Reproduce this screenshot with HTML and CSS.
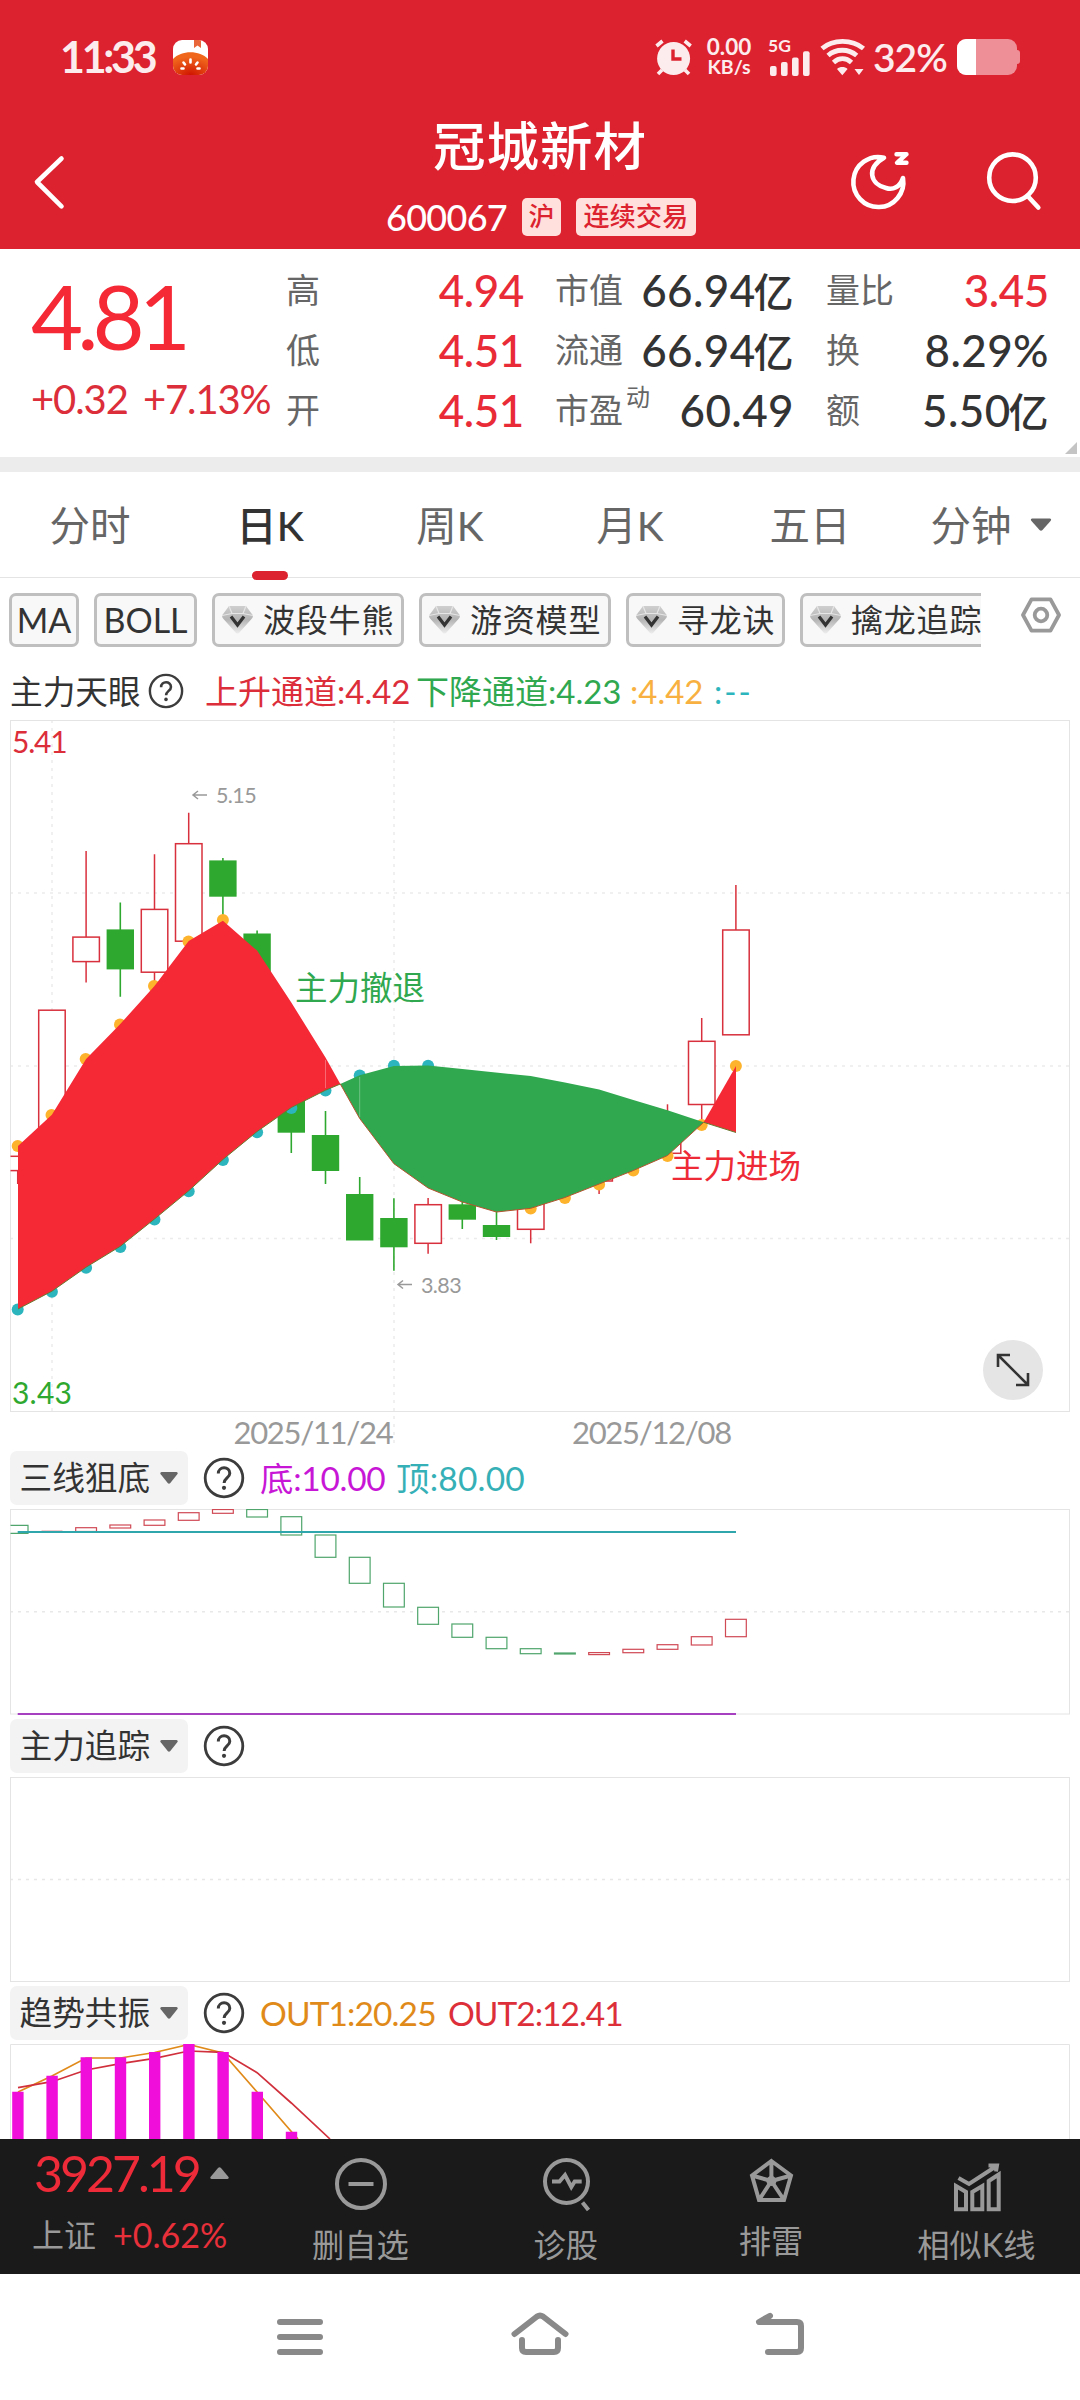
FILE: index.html
```html
<!DOCTYPE html>
<html lang="zh-CN">
<head>
<meta charset="utf-8">
<title>冠城新材 600067</title>
<link rel="stylesheet" href="styles.css">
</head>
<body>
<header class="header">
  <div class="status">
    <span class="clock">11:33</span>
    <svg class="app-icon" width="35" height="35" viewBox="0 0 35 35">
      <defs>
        <clipPath id="app-clip"><rect width="35" height="35" rx="9"/></clipPath>
        <radialGradient id="app-fill" cx="0.5" cy="1" r="0.8"><stop offset="0" stop-color="#d01400"/><stop offset="1" stop-color="#f0671c"/></radialGradient>
      </defs>
      <g clip-path="url(#app-clip)">
        <rect width="35" height="35" fill="#fff"/>
        <path d="M0 19C8 10 27 10 35 19V35H0Z" fill="url(#app-fill)"/>
        <path d="M21 0h7v8l-3.500-2.500L21 8Z" fill="#e8663a"/>
        <path d="M17.500 19.500v3M10.500 22.500l1.500 2M24.500 22.500l-1.500 2M8.500 28.500h2M26.500 28.500h-2" stroke="#fff" stroke-width="2.600" stroke-linecap="round"/>
      </g>
    </svg>
    <div class="status-right">
      <svg width="37" height="38" viewBox="655 38 37 38">
        <circle cx="673.600" cy="58.500" r="16.500" fill="#fdecee"/>
        <path d="M656.500 46l6-5M690.700 46l-6-5M658 74l4-4M689 74l-4-4" stroke="#fdecee" stroke-width="3.600" fill="none"/>
        <path d="M673 49.500v9.500h8.500" stroke="#dc222f" stroke-width="3.400" fill="none"/>
      </svg>
      <div class="speed"><span class="speed-num">0.00</span><span class="speed-unit">KB/s</span></div>
      <div class="signal">
        <span class="signal-type">5G</span>
        <svg width="44" height="25" viewBox="767 50 44 25" fill="#fdecee">
          <rect x="770" y="65" width="6.600" height="10" rx="2"/><rect x="781" y="61" width="6.600" height="14" rx="2"/><rect x="792" y="56.500" width="6.600" height="18.500" rx="2"/><rect x="803" y="50.300" width="6.600" height="24.700" rx="2"/>
        </svg>
      </div>
      <svg class="wifi" width="46" height="38" viewBox="820 38 46 38">
        <g fill="none" stroke="#fdecee" stroke-width="4.800">
          <path d="M822 48.500C833 39 852 39 863.500 48.500"/>
          <path d="M828 55.500C836 48.500 848.500 48.500 856.700 55.500"/>
          <path d="M833.500 62.500C839 57.500 846 57.500 851.500 62.500"/>
        </g>
        <path d="M837 69c3-2.600 7.600-2.600 10.600 0l-5.300 6.300ZM854.500 69h9l-4.500 6Z" fill="#fdecee"/>
      </svg>
      <span class="percent">32%</span>
      <div class="battery"><i class="battery-level"></i><i class="battery-nub"></i></div>
    </div>
  </div>
  <div class="titlebar">
    <svg class="back" width="36" height="60" viewBox="31 152 36 60"><path d="M61.500 158.500L37 182l24.500 24.300" fill="none" stroke="#fff" stroke-width="4.600" stroke-linecap="round" stroke-linejoin="round"/></svg>
    <div class="title">
      <h1 class="name">冠城新材</h1>
      <div class="subtitle"><span class="code">600067</span><span class="tag">沪</span><span class="tag tag-wide">连续交易</span></div>
    </div>
    <div class="actions">
      <svg width="62" height="62" viewBox="849 151 62 62" fill="none" stroke="#fff" stroke-linecap="round" stroke-linejoin="round">
        <path d="M884 157.700A25 25 0 1 0 903 178C900 187 893 190.500 886 188C870 184 866 168 884 157.700Z" stroke-width="4.600"/>
        <path d="M896.500 154.200h10l-9.500 8.600h9.500" stroke-width="4.400"/>
      </svg>
      <svg width="62" height="62" viewBox="984 151 62 62" fill="none" stroke="#fff" stroke-width="4.600" stroke-linecap="round">
        <circle cx="1012.500" cy="177.700" r="23.300"/><path d="M1029 197.500l9.300 10"/>
      </svg>
    </div>
  </div>
</header>

<section class="quote">
  <div class="price">
    <div class="last">4.81</div>
    <div class="change">+0.32 +7.13%</div>
  </div>
  <dl class="stats c1">
    <div><dt>高</dt><dd class="up">4.94</dd></div>
    <div><dt>低</dt><dd class="up">4.51</dd></div>
    <div><dt>开</dt><dd class="up">4.51</dd></div>
  </dl>
  <dl class="stats c2">
    <div><dt>市值</dt><dd>66.94<b>亿</b></dd></div>
    <div><dt>流通</dt><dd>66.94<b>亿</b></dd></div>
    <div><dt>市盈<sup>动</sup></dt><dd>60.49</dd></div>
  </dl>
  <dl class="stats c3">
    <div><dt>量比</dt><dd class="up">3.45</dd></div>
    <div><dt>换</dt><dd>8.29%</dd></div>
    <div><dt>额</dt><dd>5.50<b>亿</b></dd></div>
  </dl>
  <i class="corner"></i>
</section>

<nav class="tabs">
  <span class="tab">分时</span>
  <span class="tab active">日K</span>
  <span class="tab">周K</span>
  <span class="tab">月K</span>
  <span class="tab">五日</span>
  <span class="tab">分钟<svg class="tab-caret" width="22" height="13" viewBox="0 0 22 13"><path d="M2 .5h18q2 .5.500 2.500L12.500 12q-1.500 1.300-3 0L1.500 3Q0 1 2 .5Z" fill="#666"/></svg></span>
</nav>

<svg width="0" height="0" class="defs">
  <defs>
    <linearGradient id="gem-fill" x1="0" x2="0" y1="0" y2="1"><stop offset="0" stop-color="#cfcfcf"/><stop offset=".5" stop-color="#b4b4b4"/><stop offset="1" stop-color="#ededed"/></linearGradient>
    <symbol id="gem" viewBox="0 0 31 28">
      <path d="M7 0h17l7 9.500q0 2-1.500 3.500L17 27q-1.500 1-3 0L1.500 13Q0 11.500 0 9.500Z" fill="url(#gem-fill)"/>
      <path d="M7 0l3 7.500h11L24 0M0 9.500l10-2M31 9.500l-10-2" stroke="#e6e6e6" stroke-width="1.200" fill="none"/>
      <path d="M9 10.500l6.500 8.500L22 10.500" stroke="#333" stroke-width="3.200" fill="none"/>
    </symbol>
    <symbol id="help" viewBox="0 0 42 42">
      <circle cx="21" cy="21" r="18.800" fill="none" stroke="#3c3c3c" stroke-width="2.800"/>
      <path d="M15.300 16.500c0-7.500 11.500-7.500 11.500-.3 0 4.600-5.700 4.800-5.700 9.800" fill="none" stroke="#3c3c3c" stroke-width="3"/>
      <circle cx="21" cy="30.800" r="2.100" fill="#3c3c3c"/>
    </symbol>
    <symbol id="caret" viewBox="0 0 18 12"><path d="M1.500 0h15q2 .6.800 2.300L10.300 11q-1.300 1.300-2.600 0L.7 2.300Q-.5.600 1.500 0Z" fill="#666"/></symbol>
  </defs>
</svg>

<div class="chips">
  <div class="chip-list">
    <span class="chip latin w-ma">MA</span>
    <span class="chip latin w-boll">BOLL</span>
    <span class="chip"><svg class="gem"><use href="#gem"/></svg>波段牛熊</span>
    <span class="chip"><svg class="gem"><use href="#gem"/></svg>游资模型</span>
    <span class="chip w-three"><svg class="gem"><use href="#gem"/></svg>寻龙诀</span>
    <span class="chip"><svg class="gem"><use href="#gem"/></svg>擒龙追踪</span>
  </div>
  <svg class="settings" width="40" height="36" viewBox="0 0 40 36" fill="none" stroke="#999" stroke-width="3.800" stroke-linejoin="round"><path d="M10.500 2.300h19L38 18l-8.500 15.700h-19L2 18Z"/><circle cx="20" cy="18" r="6.300"/></svg>
</div>

<div class="legend">
  <span class="l-name">主力天眼</span>
  <svg class="l-help"><use href="#help"/></svg>
  <span class="l-up">上升通道:4.42</span>
  <span class="l-down">下降通道:4.23</span>
  <span class="l-mid">:4.42</span>
  <span class="l-none">:--</span>
</div>

<div class="main-chart">
  <svg width="1080" height="731" viewBox="0 720 1080 731">
    <clipPath id="main-clip"><rect x="10.500" y="720" width="1059" height="692"/></clipPath>
    <g stroke="#ececec" stroke-width="1.500" stroke-dasharray="3 5">
      <path d="M10 893H1069M10 1066H1069M10 1238.500H1069"/>
      <path d="M52 720V1411M394 720V1443"/>
    </g>
    <rect x="10.500" y="720.500" width="1059" height="691" fill="none" stroke="#e4e4e4"/>
    <g clip-path="url(#main-clip)">
      <g fill="#fff" stroke="#d8303c" stroke-width="1.500">
        <path d="M17.700 1170.600V1184"/><rect x="4.500" y="1156.300" width="26.500" height="14.300"/>
        <rect x="38.700" y="1010.200" width="26.500" height="125"/>
        <path d="M86.100 851V982.400"/><rect x="72.900" y="937.100" width="26.500" height="24.500"/>
        <path d="M154.500 854.300V990"/><rect x="141.300" y="909.400" width="26.500" height="62.800"/>
        <path d="M188.700 812.700V843.700"/><rect x="175.500" y="843.700" width="26.500" height="97.500"/>
        <path d="M428.100 1198V1253.700"/><rect x="414.900" y="1204.700" width="26.500" height="38.600"/>
        <path d="M530.700 1190V1243.300"/><rect x="517.500" y="1195" width="26.500" height="34.300"/>
        <path d="M599.100 1160V1194"/><rect x="585.900" y="1165" width="26.500" height="16"/>
        <path d="M667.500 1104.300V1160"/><rect x="654.300" y="1120" width="26.500" height="33.300"/>
        <path d="M701.700 1018V1120"/><rect x="688.500" y="1041.300" width="26.500" height="63.200"/>
        <path d="M735.900 885V930"/><rect x="722.700" y="930" width="26.500" height="104.800"/>
      </g>
      <g fill="#2fa82f" stroke="#2fa82f" stroke-width="1.600">
        <path d="M120.300 902.400V996.700M222.900 858V918M257.100 930.600V960M291.300 1120V1153M325.500 1111V1184M359.700 1177V1240M393.900 1198.300V1270.700M462.300 1201.700V1229M496.500 1210V1240"/>
        <g stroke="none">
          <rect x="106.600" y="929.400" width="27.400" height="40"/><rect x="209.200" y="860.400" width="27.400" height="36.300"/><rect x="243.400" y="933.500" width="27.400" height="41"/><rect x="277.600" y="1095" width="27.400" height="37.700"/><rect x="311.800" y="1135" width="27.400" height="36"/><rect x="346" y="1194" width="27.400" height="46.500"/><rect x="380.200" y="1218" width="27.400" height="29.300"/><rect x="448.600" y="1204.300" width="27.400" height="15.400"/><rect x="482.800" y="1225" width="27.400" height="12"/>
        </g>
      </g>
    </g>
    <g fill="#fdb32c">
      <circle cx="17.700" cy="1146" r="6"/><circle cx="51.500" cy="1115" r="6"/><circle cx="85.700" cy="1059" r="6"/><circle cx="120" cy="1024.500" r="6"/><circle cx="154" cy="986" r="6"/><circle cx="188.500" cy="941.500" r="6"/><circle cx="222.900" cy="920" r="6"/>
      <circle cx="530.700" cy="1208.500" r="6"/><circle cx="564.900" cy="1198" r="6"/><circle cx="599.100" cy="1184.500" r="6"/><circle cx="633.300" cy="1170.500" r="6"/><circle cx="667.500" cy="1156" r="6"/><circle cx="701.700" cy="1125" r="6"/><circle cx="735.900" cy="1066" r="6"/>
    </g>
    <g fill="#2cb5bd">
      <circle cx="17.700" cy="1309.400" r="6"/><circle cx="51.900" cy="1291.700" r="6"/><circle cx="86.100" cy="1267.700" r="6"/><circle cx="120.300" cy="1247" r="6"/><circle cx="154.500" cy="1219.500" r="6"/><circle cx="188.700" cy="1191.200" r="6"/><circle cx="222.900" cy="1160" r="6"/><circle cx="257.100" cy="1132.200" r="6"/><circle cx="291.300" cy="1108" r="6"/><circle cx="325.500" cy="1090.500" r="6"/><circle cx="359.700" cy="1075.500" r="6"/><circle cx="393.900" cy="1065.700" r="6"/><circle cx="428.100" cy="1065.700" r="6"/>
    </g>
    <path fill="#f52835" d="M18 1146L51.900 1114.700 86.100 1059 120.300 1024 154.500 986 188.700 941 222.900 920.800 257.100 950.600 291.300 1002.500 325.500 1057.600 340.300 1084 325.500 1090.200 291.300 1107.500 257.100 1131.500 222.900 1159.500 188.700 1190.800 154.500 1219 120.300 1246.300 86.100 1267.200 51.900 1291.200 18 1309Z"/>
    <path fill="#2fa84f" d="M340.300 1084L359.700 1075.300 393.900 1066 428.100 1065.500 462.300 1069 530.700 1076 564.900 1082.500 599.100 1089.500 633.300 1100 667.500 1110.300 703.700 1122.300 667.500 1155.500 633.300 1170.500 599.100 1184 564.900 1197.500 530.700 1208.300 496.500 1212 462.300 1202 428.100 1188 393.900 1163.700 359.700 1118.500Z"/>
    <path fill="#f52835" d="M703.700 1122.300L736 1066V1132.500Z"/>
    <path fill="none" stroke="#b3542e" stroke-width="1" d="M340.300 1084L359.700 1118.500 393.900 1163.700 428.100 1188 462.300 1202 496.500 1212 530.700 1208.300 564.900 1197.500 599.100 1184 633.300 1170.500 667.500 1155.500 703.700 1122.300"/>
    <path fill="none" stroke="#6a7a2e" stroke-width="1" d="M18 1309L51.900 1291.200 86.100 1267.200 120.300 1246.300 154.500 1219 188.700 1190.800 222.900 1159.500 257.100 1131.500 291.300 1107.500 325.500 1090.200 340.300 1084M703.700 1122.300L736 1132.500"/>
    <path stroke="#fff" stroke-opacity=".3" d="M325.500 1060V1088M359.700 1077V1117"/>
    <g fill="none" stroke="#999" stroke-width="1.500"><path d="M207 795H193M198 791L193 795l5 4M412 1284.500H398M403 1280.500L398 1284.500l5 4"/></g>
    <g class="chart-note"><text x="216" y="802.500">5.15</text><text x="421" y="1292.500">3.83</text></g>
    <text class="signal-label green" x="295" y="1000">主力撤退</text>
    <text class="signal-label red" x="671" y="1177.500">主力进场</text>
    <text class="scale red-d" x="12" y="753.300">5.41</text>
    <text class="scale green-d" x="12" y="1403.500">3.43</text>
    <text class="date" x="233.500" y="1444">2025/11/24</text>
    <text class="date" x="572" y="1444">2025/12/08</text>
  </svg>
  <button class="expand"><svg width="40" height="40" viewBox="0 0 40 40" fill="none" stroke="#333" stroke-width="2.600"><path d="M5 5L35 35M17 5H5V17M23 35H35V23"/></svg></button>
</div>

<section class="panel">
  <div class="panel-head">
    <span class="selector">三线狙底<svg class="caret"><use href="#caret"/></svg></span>
    <svg class="help"><use href="#help"/></svg>
    <span class="val v-base">底:10.00</span><span class="val v-top">顶:80.00</span>
  </div>
  <svg class="plot" width="1080" height="206" viewBox="0 1509 1080 206">
    <path d="M10 1611.700H1069" stroke="#e8e8e8" stroke-width="1.500" stroke-dasharray="3 5"/>
    <rect x="10.500" y="1509.500" width="1059" height="204.500" fill="none" stroke="#e4e4e4"/>
    <g fill="#fff" stroke="#4fa56c" stroke-width="1.200">
      <path d="M10.500 1525.300H28V1533.300H10.500"/>
      <rect x="246.700" y="1509.500" width="20.800" height="7.500"/><rect x="280.900" y="1516.700" width="20.800" height="18.300"/><rect x="315.100" y="1535" width="20.800" height="22.300"/><rect x="349.300" y="1557.300" width="20.800" height="26"/><rect x="383.500" y="1583.300" width="20.800" height="23.700"/><rect x="417.700" y="1607.300" width="20.800" height="17"/><rect x="451.900" y="1624" width="20.800" height="13.300"/><rect x="486.100" y="1637.300" width="20.800" height="11.400"/><rect x="520.300" y="1648.700" width="20.800" height="5"/><rect x="554.500" y="1653" width="20.800" height="1"/>
    </g>
    <g fill="#fff" stroke="#d04a55" stroke-width="1.200">
      <path d="M41.500 1531.300h21"/>
      <rect x="75.700" y="1527.700" width="20.800" height="3.800"/><rect x="109.900" y="1525" width="20.800" height="3"/><rect x="144.100" y="1520" width="20.800" height="5.300"/><rect x="178.300" y="1512.700" width="20.800" height="7.600"/><rect x="212.500" y="1509.500" width="20.800" height="3.800"/>
      <rect x="588.700" y="1652.600" width="20.800" height="2"/><rect x="622.900" y="1649.300" width="20.800" height="3.400"/><rect x="657.100" y="1644.700" width="20.800" height="4.600"/><rect x="691.300" y="1636.700" width="20.800" height="8.300"/><rect x="725.500" y="1619.300" width="20.800" height="17.400"/>
    </g>
    <path d="M17.700 1532H736" stroke="#2ea6ab" stroke-width="2"/>
    <path d="M17.700 1714H736" stroke="#a63fc0" stroke-width="2"/>
  </svg>
</section>

<section class="panel">
  <div class="panel-head">
    <span class="selector">主力追踪<svg class="caret"><use href="#caret"/></svg></span>
    <svg class="help"><use href="#help"/></svg>
  </div>
  <svg class="plot" width="1080" height="206" viewBox="0 1777 1080 206">
    <path d="M10 1879.500H1069" stroke="#e8e8e8" stroke-width="1.500" stroke-dasharray="3 5"/>
    <rect x="10.500" y="1777.500" width="1059" height="204" fill="none" stroke="#e4e4e4"/>
  </svg>
</section>

<section class="panel last-panel">
  <div class="panel-head">
    <span class="selector">趋势共振<svg class="caret"><use href="#caret"/></svg></span>
    <svg class="help"><use href="#help"/></svg>
    <span class="val v-out1">OUT1:20.25</span><span class="val v-out2">OUT2:12.41</span>
  </div>
  <svg class="plot" width="1080" height="95" viewBox="0 2044 1080 95">
    <path d="M10.500 2140V2044.500H1069.500V2140" fill="none" stroke="#e4e4e4"/>
    <path fill="none" stroke="#e08a1a" stroke-width="1.700" d="M18 2092L51.900 2076 86.100 2058 120.300 2058 154.500 2052.500 188.700 2044.500 222.900 2053 257.100 2092 291.300 2131.500 298 2139"/>
    <path fill="none" stroke="#d0303c" stroke-width="1.700" d="M18 2087.700L51.900 2081.700 86.100 2070 120.300 2063.700 154.500 2058.300 188.700 2051 222.900 2052.300 257.100 2072.700 291.300 2103 330 2139"/>
    <path fill="#f00edb" d="M12.200 2091.700h11.400V2139h-11.400ZM46.400 2075.700h11.400V2139h-11.400ZM80.600 2057.300h11.400V2139h-11.400ZM114.800 2057.300h11.400V2139h-11.400ZM149 2052h11.400V2139h-11.400ZM183.200 2044h11.400V2139h-11.400ZM217.400 2052h11.400V2139h-11.400ZM251.600 2091.700h11.400V2139h-11.400ZM285.800 2131.700h11.400V2139h-11.400Z"/>
  </svg>
</section>

<footer class="toolbar">
  <div class="index">
    <div class="index-row"><span class="index-value">3927.19</span><svg width="19" height="12" viewBox="0 0 19 12"><path d="M1.500 12h16q2-.6.800-2.300L11 1Q9.500-.6 8 1L.7 9.700Q-.5 11.400 1.500 12Z" fill="#999"/></svg></div>
    <div class="index-row2"><span class="index-name">上证</span><span class="index-change">+0.62%</span></div>
  </div>
  <div class="tools">
    <div class="tool"><svg width="60" height="60" viewBox="331 2154 60 60"><circle cx="361" cy="2184" r="24"/><path d="M348.500 2184H373.500"/></svg><span>删自选</span></div>
    <div class="tool"><svg width="60" height="60" viewBox="536 2154 60 60" stroke-width="3.800"><circle cx="565.500" cy="2181.500" r="21.500"/><path d="M551 2181.500h7.500l5.500-6.500 6.300 12 3.400-5.500h7M581.500 2202.500l6 7.500"/></svg><span>诊股</span></div>
    <div class="tool up4"><svg width="60" height="60" viewBox="742 2154 60 60" stroke-width="3.300"><path d="M771.400 2161L791 2175.500 784 2200H759L752 2175.500ZM771.400 2161V2181L791 2175.500M771.400 2181L784 2200M771.400 2181L759 2200M771.400 2181L752 2175.500"/><circle cx="771.400" cy="2181" r="3" fill="#999"/></svg><span>排雷</span></div>
    <div class="tool"><svg width="60" height="60" viewBox="947 2154 60 60" stroke-width="3.500"><path d="M956 2186l10 6v17.300H956ZM972.300 2192l10-6v23.300h-10ZM988.700 2181l10-6.500v34.800h-10ZM958.500 2178l10.500 6 26-17M988.500 2165.500h8.500l-1 6"/></svg><span>相似K线</span></div>
  </div>
</footer>

<div class="sysnav">
  <svg width="300" height="50" viewBox="270 2310 300 50"><path d="M280 2322H320M280 2337H320M280 2352H320M514.500 2334L537 2316.500Q540 2314.500 543 2316.500L565.500 2334M522 2340V2348Q522 2352 526 2352H554Q558 2352 558 2348V2340"/></svg>
  <svg width="60" height="50" viewBox="750 2310 60 50"><path d="M770 2315.800L759 2322H797Q801 2322 801 2326V2348Q801 2352 797 2352H768"/></svg>
</div>
</body>
</html>
```
FILE: styles.css
```css
* { box-sizing: border-box; margin: 0; padding: 0; }
body { width: 1080px; height: 2400px; overflow: hidden; background: #fff; color: #333; font-family: Lato, "Noto Sans CJK SC", sans-serif; }
svg { display: block; flex: none; }
.defs { position: absolute; }

.header { height: 249px; background: #dc222f; color: #fff; }
.status { display: flex; align-items: center; height: 114px; padding: 0 60px 0 60px; color: #fdecee; }
.clock { width: 113px; font-size: 43px; line-height: 52px; font-weight: 700; letter-spacing: -3.3px; }
.status-right { display: flex; align-items: center; margin-left: auto; height: 38px; }
.speed { display: flex; flex-direction: column; align-items: center; width: 50px; margin-left: 12px; font-weight: 700; }
.speed-num { font-size: 22.500px; line-height: 18px; }
.speed-unit { font-size: 19.500px; line-height: 21px; }
.signal { width: 44px; margin-left: 13px; }
.signal-type { display: block; height: 12px; padding-left: 1px; font-size: 17.500px; line-height: 14px; font-weight: 700; }
.wifi { margin-left: 9px; }
.percent { width: 77px; margin-left: 7px; font-size: 39px; line-height: 46px; font-weight: 600; letter-spacing: -1px; white-space: nowrap; }
.battery { position: relative; width: 60px; height: 36px; margin: 0 3px 0 7px; border-radius: 9px; background: #ee8f97; }
.battery-level { display: block; width: 19px; height: 36px; border-radius: 9px 0 0 9px; background: #fff; }
.battery-nub { position: absolute; right: -3px; top: 11px; width: 4px; height: 14px; border-radius: 0 3px 3px 0; background: #ee8f97; }

.titlebar { display: grid; grid-template-columns: 240px 600px 240px; height: 135px; }
.back { margin: 38px 0 0 31px; }
.title { text-align: center; }
.name { height: 64px; font-size: 52.500px; line-height: 64px; font-weight: 500; letter-spacing: 1px; }
.subtitle { display: flex; justify-content: center; align-items: center; height: 38px; margin: 20px 0 0 2px; }
.code { margin-right: 15px; font-size: 36px; line-height: 38px; letter-spacing: -0.700px; font-weight: 500; }
.tag { width: 39px; height: 38px; border-radius: 5px; background: #ffe0dc; color: #dc222f; font-size: 26px; line-height: 37px; text-align: center; font-weight: 500; }
.tag-wide { width: 120px; margin-left: 15px; letter-spacing: .3px; }
.actions { display: flex; gap: 73px; margin: 37px 0 0 9px; }

.quote { position: relative; display: flex; height: 223px; padding-top: 11px; border-bottom: 15px solid #ececec; }
.price { width: 287px; padding-left: 31px; color: #f52835; white-space: nowrap; }
.last { height: 109px; font-size: 90px; line-height: 110px; letter-spacing: -6px; }
.change { height: 60px; font-size: 40px; line-height: 60px; letter-spacing: -1.100px; word-spacing: 6px; color: #dc2d3a; }
.stats > div { display: flex; justify-content: space-between; height: 60px; line-height: 60px; white-space: nowrap; }
.stats dt { font-size: 34px; color: #666; margin-left: -1px; }
.stats sup { font-size: 24px; line-height: 0; vertical-align: 17px; margin-left: 3px; }
.stats dd { font-size: 44px; font-weight: 500; letter-spacing: .4px; }
.stats dd b { font-size: 40px; font-weight: 500; margin-left: -2px; }
.stats .up { color: #e92b38; letter-spacing: -.4px; }
.c1 { width: 237px; }
.c2 { width: 238px; margin-left: 32px; }
.c3 { width: 222px; margin-left: 33px; }
.corner { position: absolute; right: 3px; bottom: 3px; border-left: 12px solid transparent; border-bottom: 12px solid #c4c4c4; }

.tabs { display: grid; grid-template-columns: repeat(6, 1fr); height: 106px; border-bottom: 1px solid #e4e4e4; }
.tab { position: relative; display: flex; justify-content: center; font-size: 40.500px; line-height: 108px; color: #666; }
.tab-caret { margin: 46px -2px 0 18px; }
.active { color: #333; font-weight: 500; }
.active::after { content: ""; position: absolute; left: 72px; bottom: 0; width: 36px; height: 9px; border-radius: 5px; background: #dc222f; }

.chips { display: flex; height: 84px; padding: 15px 0 0 9px; }
.chip-list { display: flex; gap: 15px; width: 972px; height: 54px; overflow: hidden; }
.chip { display: flex; flex: none; align-items: center; width: 192px; height: 54px; padding: 0 6.500px; border: 3px solid #bfbfbf; border-radius: 7px; background: #f8f8f8; font-size: 32px; letter-spacing: .8px; line-height: 46px; white-space: nowrap; }
.latin { justify-content: center; padding: 0; font-size: 34px; letter-spacing: 0; }
.w-ma { width: 70px; }
.w-boll { width: 103px; }
.w-three { width: 159px; }
.gem { width: 31px; height: 28px; margin-right: 10.500px; }
.settings { margin: 4px 0 0 40px; }

.legend { display: flex; height: 58px; padding-left: 10px; font-size: 33px; line-height: 59px; white-space: nowrap; }
.l-name { width: 138px; font-size: 32.700px; }
.l-help { width: 36px; height: 36px; margin: 10.500px 21px 0 0; }
.l-up { width: 211px; color: #dc2d3a; }
.l-down { width: 214px; color: #2fa84f; }
.l-mid { width: 84px; color: #f8b140; }
.l-none { color: #2cb5bd; letter-spacing: 2px; }

.main-chart { position: relative; height: 731px; }
.chart-note { font-size: 21.500px; fill: #999; letter-spacing: -.6px; }
.signal-label { font-size: 32.500px; }
.green { fill: #2fa84f; }
.red { fill: #ee2a37; }
.scale { font-size: 30px; }
.red-d { fill: #dc2d3a; letter-spacing: -1.200px; }
.green-d { fill: #2fa82f; letter-spacing: .2px; }
.date { font-size: 31px; fill: #999; letter-spacing: -1.300px; }
.expand { position: absolute; left: 983px; top: 620px; display: flex; align-items: center; justify-content: center; width: 60px; height: 60px; border: 0; border-radius: 50%; background: #e5e5e5; }

.panel { height: 267.500px; }
.panel-head { display: flex; align-items: center; height: 54px; margin-bottom: 4px; padding-left: 10px; font-size: 33.500px; line-height: 52px; white-space: nowrap; }
.selector { display: flex; align-items: center; width: 178px; height: 54px; padding-left: 9.500px; border-radius: 7px; background: #f3f3f3; font-size: 32.700px; }
.caret { width: 18px; height: 12px; margin-left: 10px; }
.help { width: 42px; height: 42px; margin: 0 15px 0 15px; }
.val { letter-spacing: -.3px; }
.v-base { width: 136px; color: #c816d6; }
.v-top { color: #35b0b6; letter-spacing: .2px; }
.v-out1 { width: 188px; color: #e08a1a; letter-spacing: -.9px; }
.v-out2 { color: #dc2f3a; letter-spacing: -1px; }
.last-panel { height: 153px; overflow: hidden; }

.toolbar { display: flex; height: 135px; background: #1a1a1a; color: #999; }
.index { width: 259px; padding: 6px 0 0 32px; white-space: nowrap; }
.index-row { display: flex; align-items: center; height: 56px; }
.index-value { width: 178px; font-size: 50px; line-height: 56px; letter-spacing: -3px; color: #ee2b38; padding-left: 2px; }
.index-row2 { display: flex; height: 66px; line-height: 67px; }
.index-name { width: 81px; font-size: 32px; }
.index-change { font-size: 34px; color: #e8303b; }
.tools { display: grid; grid-template-columns: repeat(4, 205.300px); }
.tool { display: flex; flex-direction: column; align-items: center; padding-top: 15px; font-size: 32.300px; line-height: 62px; white-space: nowrap; }
.tool span { margin-left: -2px; }
.tool svg { fill: none; stroke: #999; stroke-width: 4; }
.up4 span { margin-top: -4px; }

.sysnav { display: flex; gap: 180px; height: 126px; padding: 36px 0 0 270px; background: #fff; }
.sysnav svg { fill: none; stroke: #898989; stroke-width: 6; stroke-linecap: round; stroke-linejoin: round; }
```
